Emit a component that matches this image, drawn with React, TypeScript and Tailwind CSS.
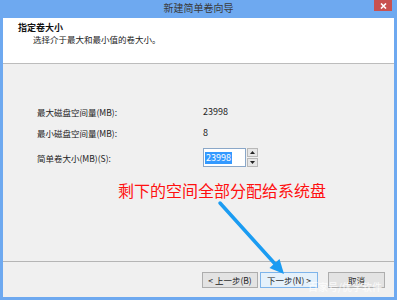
import React from "react";

const font = { fontFamily: '"Noto Sans CJK SC", "Noto Sans", sans-serif' };

export default function App() {
  return (
    <div
      className="relative w-[397px] h-[300px] bg-[#6ea9f0] flex flex-col pl-[3px] pr-[3px] pb-[3px] overflow-hidden"
      style={font}
    >
      {/* title bar */}
      <div className="relative h-[18px] flex items-center justify-center pb-[3px]">
        <span className="text-[10px] leading-[12px] text-[#3a3a3a]">新建简单卷向导</span>
        <div className="absolute right-[2px] top-0 w-[18px] h-[11px] bg-[#c85150] flex items-center justify-center">
          <svg width="7" height="6" viewBox="0 0 7 6">
            <path d="M1 0.5 L6 5.5 M6 0.5 L1 5.5" stroke="#ffffff" strokeWidth="1.6" />
          </svg>
        </div>
      </div>

      {/* client */}
      <div className="flex-1 flex flex-col bg-[#f0f0f0]">
        {/* header */}
        <div className="h-[46px] bg-white border-b border-[#bcbcbc] pl-[15px] pt-[4px]">
          <div className="text-[9px] leading-[12px] font-bold text-[#111]">指定卷大小</div>
          <div className="ml-[15px] text-[8.5px] leading-[11px] text-[#222]">
            选择介于最大和最小值的卷大小。
          </div>
        </div>

        {/* body */}
        <div className="flex-1 pl-[34px] pt-[42px] text-[8.5px] text-[#222]">
          <div className="grid grid-cols-[166px_1fr] h-[12px] leading-[12px]">
            <span>最大磁盘空间量(MB):</span>
            <span className="text-[9px]">23998</span>
          </div>
          <div className="grid grid-cols-[166px_1fr] h-[12px] leading-[12px] mt-[9px]">
            <span>最小磁盘空间量(MB):</span>
            <span className="text-[9px]">8</span>
          </div>
          <div className="grid grid-cols-[166px_1fr] h-[19px] items-center mt-[9px]">
            <span className="leading-[12px]">简单卷大小(MB)(S):</span>
            <div className="flex items-stretch h-[19px]">
              <div className="w-[43px] h-[19px] bg-white border border-[#8aa7c8] flex items-center pl-[1px]">
                <span className="bg-[#3399ff] text-white text-[9px] leading-[12px] px-[1px]">23998</span>
              </div>
              <div className="w-[11px] flex flex-col ml-[1px] gap-[1px]">
                <div className="flex-1 bg-[#e6e6e6] border border-[#b8b8b8] flex items-center justify-center">
                  <svg width="5" height="3" viewBox="0 0 5 3"><path d="M0 3 L2.5 0 L5 3 Z" fill="#222" /></svg>
                </div>
                <div className="flex-1 bg-[#e6e6e6] border border-[#b8b8b8] flex items-center justify-center">
                  <svg width="5" height="3" viewBox="0 0 5 3"><path d="M0 0 L2.5 3 L5 0 Z" fill="#222" /></svg>
                </div>
              </div>
            </div>
          </div>
          <div className="ml-[81px] mt-[13px] text-[16px] leading-[20px] text-[#ff1010] whitespace-nowrap">
            剩下的空间全部分配给系统盘
          </div>
        </div>

        {/* footer */}
        <div className="h-[36px] border-t border-[#b5b5b5] flex justify-end items-start pt-[10px] pr-[9px] text-[8.5px] text-[#222]">
          <div className="w-[56px] h-[16px] border border-[#adadad] bg-[#e3e3e3] flex items-center justify-center leading-[12px]">
            &lt; 上一步(B)
          </div>
          <div className="w-[58px] h-[16px] ml-[2px] border border-[#7eb4ea] bg-[#e5f1fb] flex items-center justify-center leading-[12px]">
            下一步(N) &gt;
          </div>
          <div className="w-[57px] h-[16px] ml-[10px] border border-[#adadad] bg-[#e3e3e3] flex items-center justify-center leading-[12px]">
            取消
          </div>
        </div>
      </div>

      {/* arrow overlay */}
      <svg className="absolute left-0 top-0 pointer-events-none" width="397" height="300" viewBox="0 0 397 300">
        <line x1="220" y1="203" x2="276" y2="265" stroke="#1b9cf2" strokeWidth="3.5" strokeLinecap="round" />
        <polygon points="284,274 269.5,268 279.5,259" fill="#1b9cf2" />
      </svg>

      {/* watermark */}
      <div className="absolute left-[308px] top-[281px] text-[10px] leading-[12px] text-white/80 whitespace-nowrap">
        百家号/优学软件
      </div>
    </div>
  );
}
